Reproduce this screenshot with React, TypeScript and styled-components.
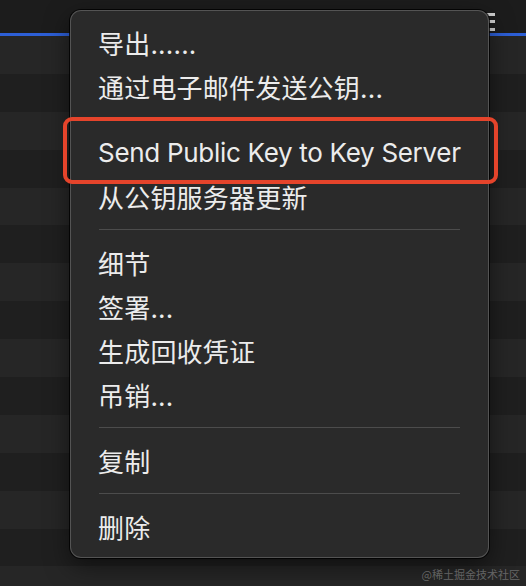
import React from "react";
import styled, { createGlobalStyle, css } from "styled-components";

const Global = createGlobalStyle`
  html, body { margin: 0; padding: 0; background: #1f1f1f; }
  body { font-family: Inter, "Noto Sans CJK SC", sans-serif; overflow: hidden; }
`;

const Stage = styled.div`
  position: relative;
  width: 526px;
  height: 586px;
  overflow: hidden;
  background: #1f1f1f;
  display: flex;
  flex-direction: column;
`;

const TopBar = styled.div`
  height: 33px;
  flex: none;
  background: #1c1c1c;
  display: flex;
  justify-content: flex-end;
  align-items: flex-start;
  padding: 12px 31px 0 0;
  box-sizing: border-box;
`;

const Accent = styled.div`
  height: 3px;
  flex: none;
  background: #2d5fd6;
`;

const Rows = styled.div`
  display: flex;
  flex-direction: column;
`;

const Row = styled.div<{ $alt: boolean }>`
  height: 37.9px;
  flex: none;
  background: ${(p) => (p.$alt ? "#1f1f1f" : "#262626")};
`;

const Menu = styled.div`
  position: absolute;
  left: 70px;
  top: 10px;
  width: 419px;
  box-sizing: border-box;
  background: #2a2a2a;
  border: 1px solid rgba(255, 255, 255, 0.2);
  border-radius: 11px;
  box-shadow: 0 0 0 1px rgba(0, 0, 0, 0.8), 0 8px 24px rgba(0, 0, 0, 0.5);
  padding: 9.5px 0 8px;
  display: flex;
  flex-direction: column;
`;

const Item = styled.div<{ $marked?: boolean; $latin?: boolean }>`
  position: relative;
  height: 44px;
  display: flex;
  align-items: center;
  padding: 0 27px;
  font-family: Inter, "Noto Sans CJK SC", sans-serif;
  font-size: 26px;
  letter-spacing: ${(p) => (p.$latin ? "-0.3px" : "0.2px")};
  color: #ececec;
  white-space: nowrap;
  ${(p) =>
    p.$marked &&
    css`
      &::after {
        content: "";
        position: absolute;
        left: -8px;
        right: -10px;
        top: -13.5px;
        bottom: -9.5px;
        border: 4px solid #e5442b;
        border-radius: 9px;
      }
    `}
`;

const Separator = styled.div`
  height: 22px;
  display: flex;
  align-items: center;
  padding: 0 28px;
  &::before {
    content: "";
    flex: 1;
    height: 1.5px;
    background: #4c4c4c;
  }
`;

const Watermark = styled.div`
  position: absolute;
  right: 6px;
  bottom: 4px;
  font-family: "Noto Sans CJK SC", sans-serif;
  font-size: 11px;
  color: rgba(255, 255, 255, 0.3);
`;

const ListIcon = () => (
  <svg width="12" height="20" viewBox="0 0 12 20">
    <rect x="0" y="1" width="12" height="3" fill="#d0d0d0" />
    <rect x="0" y="8" width="12" height="3" fill="#d0d0d0" />
    <rect x="0" y="16" width="12" height="3" fill="#d0d0d0" />
  </svg>
);

type Entry = { label: string; marked?: boolean; latin?: boolean } | "sep";

const entries: Entry[] = [
  { label: "导出......" },
  { label: "通过电子邮件发送公钥..." },
  "sep",
  { label: "Send Public Key to Key Server", marked: true, latin: true },
  { label: "从公钥服务器更新" },
  "sep",
  { label: "细节" },
  { label: "签署..." },
  { label: "生成回收凭证" },
  { label: "吊销..." },
  "sep",
  { label: "复制" },
  "sep",
  { label: "删除" },
];

export default function App() {
  return (
    <Stage>
      <Global />
      <TopBar>
        <ListIcon />
      </TopBar>
      <Accent />
      <Rows>
        {Array.from({ length: 15 }).map((_, i) => (
          <Row key={i} $alt={i % 2 === 1} />
        ))}
      </Rows>
      <Menu>
        {entries.map((e, i) =>
          e === "sep" ? (
            <Separator key={i} />
          ) : (
            <Item key={i} $marked={e.marked} $latin={e.latin}>
              {e.label}
            </Item>
          )
        )}
      </Menu>
      <Watermark>@稀土掘金技术社区</Watermark>
    </Stage>
  );
}
